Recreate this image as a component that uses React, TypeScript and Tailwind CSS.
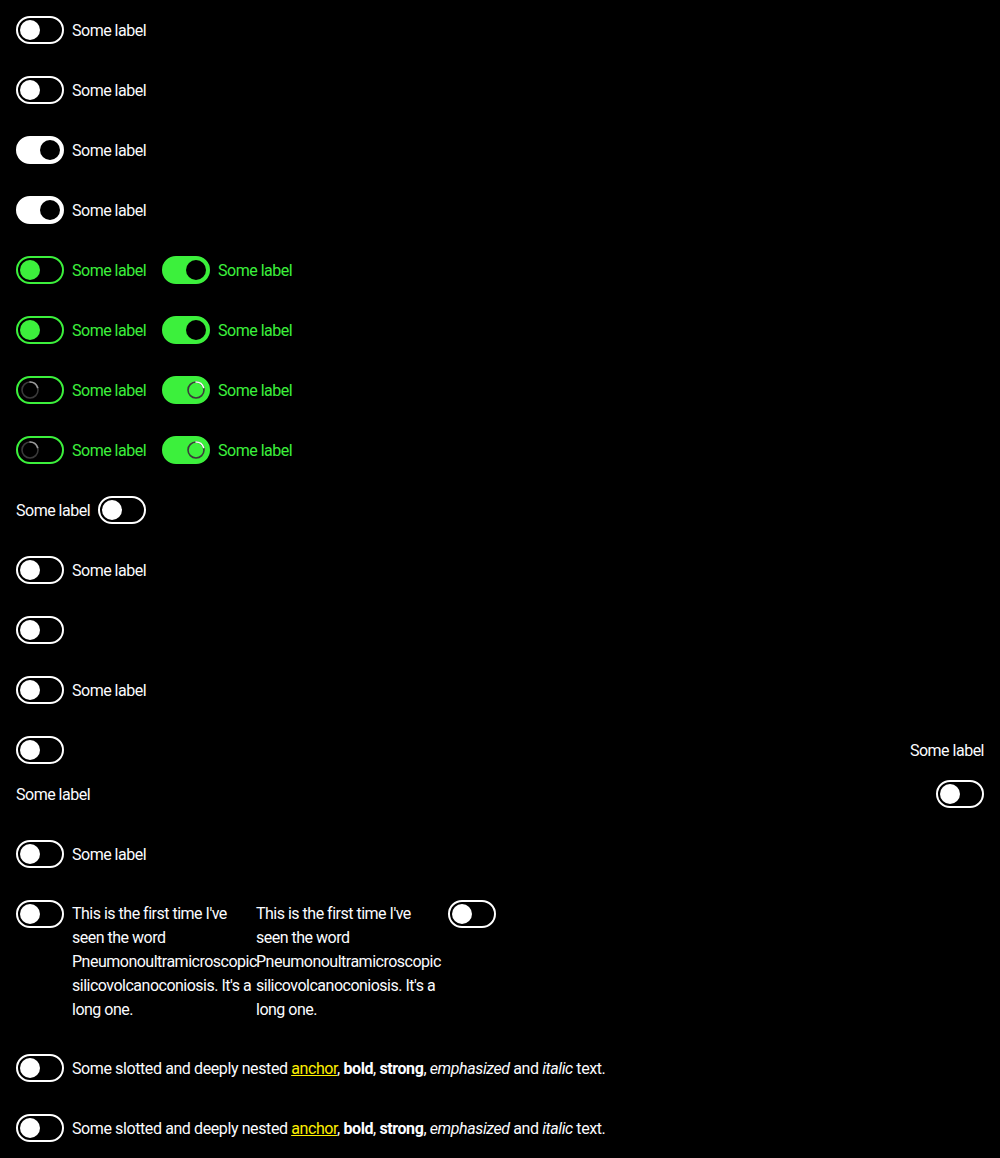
import React from "react";

type Tone = "neutral" | "green";

function Spinner({ onGreen }: { onGreen: boolean }) {
  return (
    <svg width="18" height="18" viewBox="0 0 18 18" className="block">
      <circle cx="9" cy="9" r="8" fill={onGreen ? "#3cf03c" : "#000"} stroke="#3a3a3a" strokeWidth="1.6" />
      <path
        d="M9 1 A8 8 0 0 1 16.6 6.5"
        fill="none"
        stroke={onGreen ? "#ffffff" : "#9a9a9a"}
        strokeWidth="1.6"
        strokeLinecap="round"
      />
    </svg>
  );
}

function Switch({
  checked = false,
  tone = "neutral",
  loading = false,
}: {
  checked?: boolean;
  tone?: Tone;
  loading?: boolean;
}) {
  const green = tone === "green";
  const track = checked
    ? green
      ? "bg-[#3cf03c] border-[#3cf03c]"
      : "bg-white border-white"
    : green
      ? "bg-black border-[#3cf03c]"
      : "bg-black border-white";
  const knob = checked ? "bg-black" : green ? "bg-[#3cf03c]" : "bg-white";
  return (
    <span
      className={`relative inline-flex h-7 w-12 shrink-0 items-center rounded-full border-2 ${track} ${
        checked ? "justify-end pr-[2px]" : "justify-start pl-[2px]"
      }`}
    >
      {loading ? (
        <span className="flex h-5 w-5 items-center justify-center">
          <Spinner onGreen={checked} />
        </span>
      ) : (
        <span className={`h-5 w-5 rounded-full ${knob}`} />
      )}
    </span>
  );
}

function Row({ children }: { children: React.ReactNode }) {
  return <div className="flex items-center gap-4 p-4">{children}</div>;
}

function Text({ children, className = "" }: { children: React.ReactNode; className?: string }) {
  return <span className={`pt-[2px] leading-6 ${className}`}>{children}</span>;
}

function Item({
  checked,
  tone = "neutral",
  loading,
  labelFirst,
  label = "Some label",
}: {
  checked?: boolean;
  tone?: Tone;
  loading?: boolean;
  labelFirst?: boolean;
  label?: string | null;
}) {
  const text = tone === "green" ? "text-[#3cf03c]" : "text-[#fbfcff]";
  return (
    <label className="flex items-center gap-2">
      {labelFirst && <Text className={text}>{label}</Text>}
      <Switch checked={checked} tone={tone} loading={loading} />
      {!labelFirst && label && <Text className={text}>{label}</Text>}
    </label>
  );
}

function RichText() {
  return (
    <Text className="tracking-[-0.4px] text-[#fbfcff]">
      Some slotted and deeply nested{" "}
      <a href="#" className="text-[#fff000] underline">
        anchor
      </a>
      , <b className="font-bold">bold</b>, <strong className="font-bold">strong</strong>,{" "}
      <em className="italic">emphasized</em> and <i className="italic">italic</i> text.
    </Text>
  );
}

export default function App() {
  return (
    <div
      className="min-h-screen bg-black text-base tracking-[-0.5px] text-[#fbfcff]"
      style={{ fontFamily: "Roboto, 'Liberation Sans', sans-serif" }}
    >
      <Row>
        <Item />
      </Row>
      <Row>
        <Item />
      </Row>
      <Row>
        <Item checked />
      </Row>
      <Row>
        <Item checked />
      </Row>
      <Row>
        <Item tone="green" />
        <Item tone="green" checked />
      </Row>
      <Row>
        <Item tone="green" />
        <Item tone="green" checked />
      </Row>
      <Row>
        <Item tone="green" loading />
        <Item tone="green" checked loading />
      </Row>
      <Row>
        <Item tone="green" loading />
        <Item tone="green" checked loading />
      </Row>
      <Row>
        <Item labelFirst />
      </Row>
      <Row>
        <Item />
      </Row>
      <Row>
        <Item label={null} />
      </Row>
      <Row>
        <Item />
      </Row>

      {/* stretched */}
      <div className="flex flex-col gap-4 p-4">
        <div className="flex items-center justify-between">
          <Switch />
          <Text>Some label</Text>
        </div>
        <div className="flex items-center justify-between">
          <Text>Some label</Text>
          <Switch />
        </div>
      </div>

      <Row>
        <Item />
      </Row>

      {/* long labels */}
      <div className="flex items-start p-4">
        <div className="flex w-[240px] items-start gap-2">
          <Switch />
          <span className="mt-[2px] w-[184px] leading-6">
            This is the first time I've seen the word Pneumonoultramicroscopic
            <wbr />
            silicovolcanoconiosis. It's a long one.
          </span>
        </div>
        <div className="flex w-[240px] items-start gap-2">
          <span className="mt-[2px] w-[184px] leading-6">
            This is the first time I've seen the word Pneumonoultramicroscopic
            <wbr />
            silicovolcanoconiosis. It's a long one.
          </span>
          <Switch />
        </div>
      </div>

      <div className="flex items-center gap-2 p-4">
        <Switch />
        <RichText />
      </div>
      <div className="flex items-center gap-2 p-4">
        <Switch />
        <RichText />
      </div>
    </div>
  );
}
